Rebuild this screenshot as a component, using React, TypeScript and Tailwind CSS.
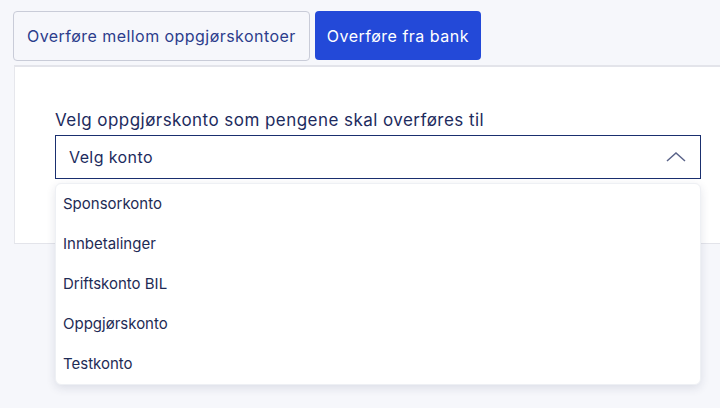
import React from "react";

const items = ["Sponsorkonto", "Innbetalinger", "Driftskonto BIL", "Oppgjørskonto", "Testkonto"];

export default function App() {
  return (
    <div
      className="w-[720px] h-[408px] overflow-hidden bg-[#f6f7fb] pt-[11px] pl-[13px]"
      style={{ fontFamily: "Inter, 'Noto Sans', sans-serif" }}
    >
      <div className="flex gap-[5px]">
        <button className="h-[50px] px-[13px] rounded-[4px] border border-[#c9ccd8] bg-[#f6f7fb] text-[16px] tracking-[0.45px] text-[#2c3d8c]">
          Overføre mellom oppgjørskontoer
        </button>
        <button className="h-[49px] px-[12px] rounded-[4px] bg-[#2349d8] text-[16px] tracking-[0.5px] text-white">
          Overføre fra bank
        </button>
      </div>
      <div className="relative mt-[4px] ml-[1px] w-[720px] h-[179px] bg-white border-t-2 border-t-[#e3e4ea] border-l border-l-[#e6e7ec] border-b border-b-[#e3e4ea] pl-[40px] pt-[41px]">
        <div className="text-[17px] leading-[24px] tracking-[0.45px] text-[#1d2b5e]">
          Velg oppgjørskonto som pengene skal overføres til
        </div>
        <div className="relative mt-[3px] w-[646px]">
          <div className="h-[44px] border-[1.5px] border-[#1a2f6f] flex items-center justify-between pl-[13px] pr-[14px]">
            <span className="text-[16px] tracking-[0.4px] text-[#1d2b5e]">Velg konto</span>
            <svg width="20" height="10" viewBox="0 0 20 10" fill="none">
              <path d="M1 9 L10 1 L19 9" stroke="#5a6389" strokeWidth="1.5" />
            </svg>
          </div>
          <div className="absolute left-0 top-[48px] w-[646px] bg-white rounded-[6px] border border-[#eef0f4] shadow-[0_3px_10px_rgba(30,40,80,0.12)] z-10">
            {items.map((it) => (
              <div key={it} className="h-[40px] flex items-center pl-[7px] text-[15px] text-[#1e2b55]">
                {it}
              </div>
            ))}
          </div>
        </div>
      </div>
    </div>
  );
}
